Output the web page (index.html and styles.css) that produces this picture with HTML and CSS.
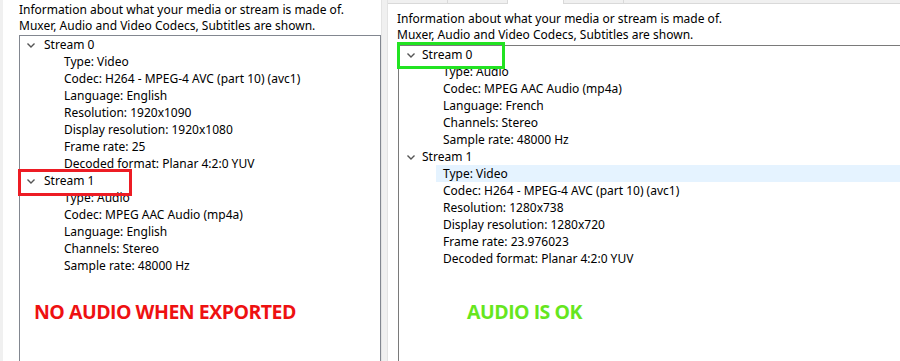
FILE: index.html
```html
<!DOCTYPE html>
<html lang="en">
<head>
    <meta charset="UTF-8">
    <title>Codec information</title>
    <link rel="stylesheet" href="styles.css">
</head>
<body>

    <!-- Left screenshot: export with missing audio -->
    <div class="pane pane-left">
        <p class="intro">Information about what your media or stream is made of.</p>
        <p class="intro">Muxer, Audio and Video Codecs, Subtitles are shown.</p>
        <div class="tree">
            <div class="node"><span class="chev"><svg width="8" height="5" viewBox="0 0 8 5"><polyline points="0.5,0.5 4,4 7.5,0.5" fill="none" stroke="#555" stroke-width="1.4"/></svg></span>Stream 0</div>
            <div class="leaf">Type: Video</div>
            <div class="leaf">Codec: H264 - MPEG-4 AVC (part 10) (avc1)</div>
            <div class="leaf">Language: English</div>
            <div class="leaf">Resolution: 1920x1090</div>
            <div class="leaf">Display resolution: 1920x1080</div>
            <div class="leaf">Frame rate: 25</div>
            <div class="leaf">Decoded format: Planar 4:2:0 YUV</div>
            <div class="node"><span class="chev"><svg width="8" height="5" viewBox="0 0 8 5"><polyline points="0.5,0.5 4,4 7.5,0.5" fill="none" stroke="#555" stroke-width="1.4"/></svg></span>Stream 1</div>
            <div class="leaf">Type: Audio</div>
            <div class="leaf">Codec: MPEG AAC Audio (mp4a)</div>
            <div class="leaf">Language: English</div>
            <div class="leaf">Channels: Stereo</div>
            <div class="leaf">Sample rate: 48000 Hz</div>
        </div>
        <div class="mark mark-red"></div>
        <div class="caption caption-red">NO AUDIO WHEN EXPORTED</div>
    </div>

    <div class="divider"></div>

    <!-- Right screenshot: source file -->
    <div class="pane pane-right">
        <div class="tabs">
            <span class="tab"></span>
            <span class="tab"></span>
            <span class="tab tab-active"></span>
            <span class="tab"></span>
        </div>
        <p class="intro">Information about what your media or stream is made of.</p>
        <p class="intro">Muxer, Audio and Video Codecs, Subtitles are shown.</p>
        <div class="tree">
            <div class="node"><span class="chev"><svg width="8" height="5" viewBox="0 0 8 5"><polyline points="0.5,0.5 4,4 7.5,0.5" fill="none" stroke="#555" stroke-width="1.4"/></svg></span>Stream 0</div>
            <div class="leaf">Type: Audio</div>
            <div class="leaf">Codec: MPEG AAC Audio (mp4a)</div>
            <div class="leaf">Language: French</div>
            <div class="leaf">Channels: Stereo</div>
            <div class="leaf">Sample rate: 48000 Hz</div>
            <div class="node"><span class="chev"><svg width="8" height="5" viewBox="0 0 8 5"><polyline points="0.5,0.5 4,4 7.5,0.5" fill="none" stroke="#555" stroke-width="1.4"/></svg></span>Stream 1</div>
            <div class="leaf leaf-hover">Type: Video</div>
            <div class="leaf">Codec: H264 - MPEG-4 AVC (part 10) (avc1)</div>
            <div class="leaf">Resolution: 1280x738</div>
            <div class="leaf">Display resolution: 1280x720</div>
            <div class="leaf">Frame rate: 23.976023</div>
            <div class="leaf">Decoded format: Planar 4:2:0 YUV</div>
        </div>
        <div class="mark mark-green"></div>
        <div class="caption caption-green">AUDIO IS OK</div>
    </div>

</body>
</html>
```

FILE: styles.css
```css
* {
    margin: 0;
    padding: 0;
    box-sizing: border-box;
}

body {
    font-family: "Noto Sans", "Open Sans", sans-serif;
    font-size: 12px;
    color: #000;
    background: #f0f0f0;
    width: 900px;
    height: 361px;
    overflow: hidden;
    display: flex;
}

.pane {
    position: relative;
    background: #fff;
    height: 100%;
    display: flex;
    flex-direction: column;
}

.pane-left {
    width: 378px;
    margin-left: 3px;
    padding: 2px 0 0 16px;
}

.divider {
    width: 7px;
    background: #f0f0f0;
    border-left: 1px solid #e3e3e3;
    border-right: 1px solid #e3e3e3;
}

.pane-right {
    flex: 1;
    padding-left: 9px;
}

.tabs {
    height: 4px;
    flex-shrink: 0;
    margin-left: -9px;
    margin-bottom: 7px;
    background: #f0f0f0;
    border-bottom: 1px solid #d9d9d9;
    display: flex;
}

.tab {
    width: 60px;
    border-right: 1px solid #d9d9d9;
}

.tab-active {
    width: 56px;
    background: #fff;
    margin-bottom: -1px;
}

.intro {
    line-height: 16px;
    white-space: nowrap;
}

.intro + .intro {
    margin-bottom: 1px;
}

.pane-right .intro + .intro {
    margin-bottom: 2px;
}

/* Tree view */
.tree {
    flex: 1;
    border: 1px solid #828790;
    border-bottom: none;
    line-height: 17px;
    white-space: nowrap;
}

.pane-right .tree {
    margin-left: 1px;
    border-color: #7a7a7a;
    border-right: none;
}

.node {
    height: 17px;
    padding-left: 7px;
    display: flex;
    align-items: center;
}

.chev {
    width: 17px;
    display: flex;
    align-items: center;
    padding-top: 1px;
}

.pane-right .node {
    padding-left: 8px;
}

.pane-right .chev {
    width: 15px;
}

.leaf {
    height: 17px;
    margin-left: 37px;
    padding-left: 7px;
}

.leaf-hover {
    background: #e5f3ff;
}

/* Annotations drawn over the screenshots */
.mark {
    position: absolute;
    border: 3px solid #ed1c24;
}

.mark-red {
    left: 15px;
    top: 169px;
    width: 114px;
    height: 27px;
}

.mark-green {
    left: 9px;
    top: 42px;
    width: 108px;
    height: 27px;
    border-color: #22e322;
}

.caption {
    position: absolute;
    font-family: "Open Sans", sans-serif;
    font-weight: 700;
    font-size: 19.5px;
    letter-spacing: -0.5px;
    top: 298px;
}

.caption-red {
    left: 31px;
    color: #ee1111;
}

.caption-green {
    left: 79px;
    color: #66e61e;
}
```
